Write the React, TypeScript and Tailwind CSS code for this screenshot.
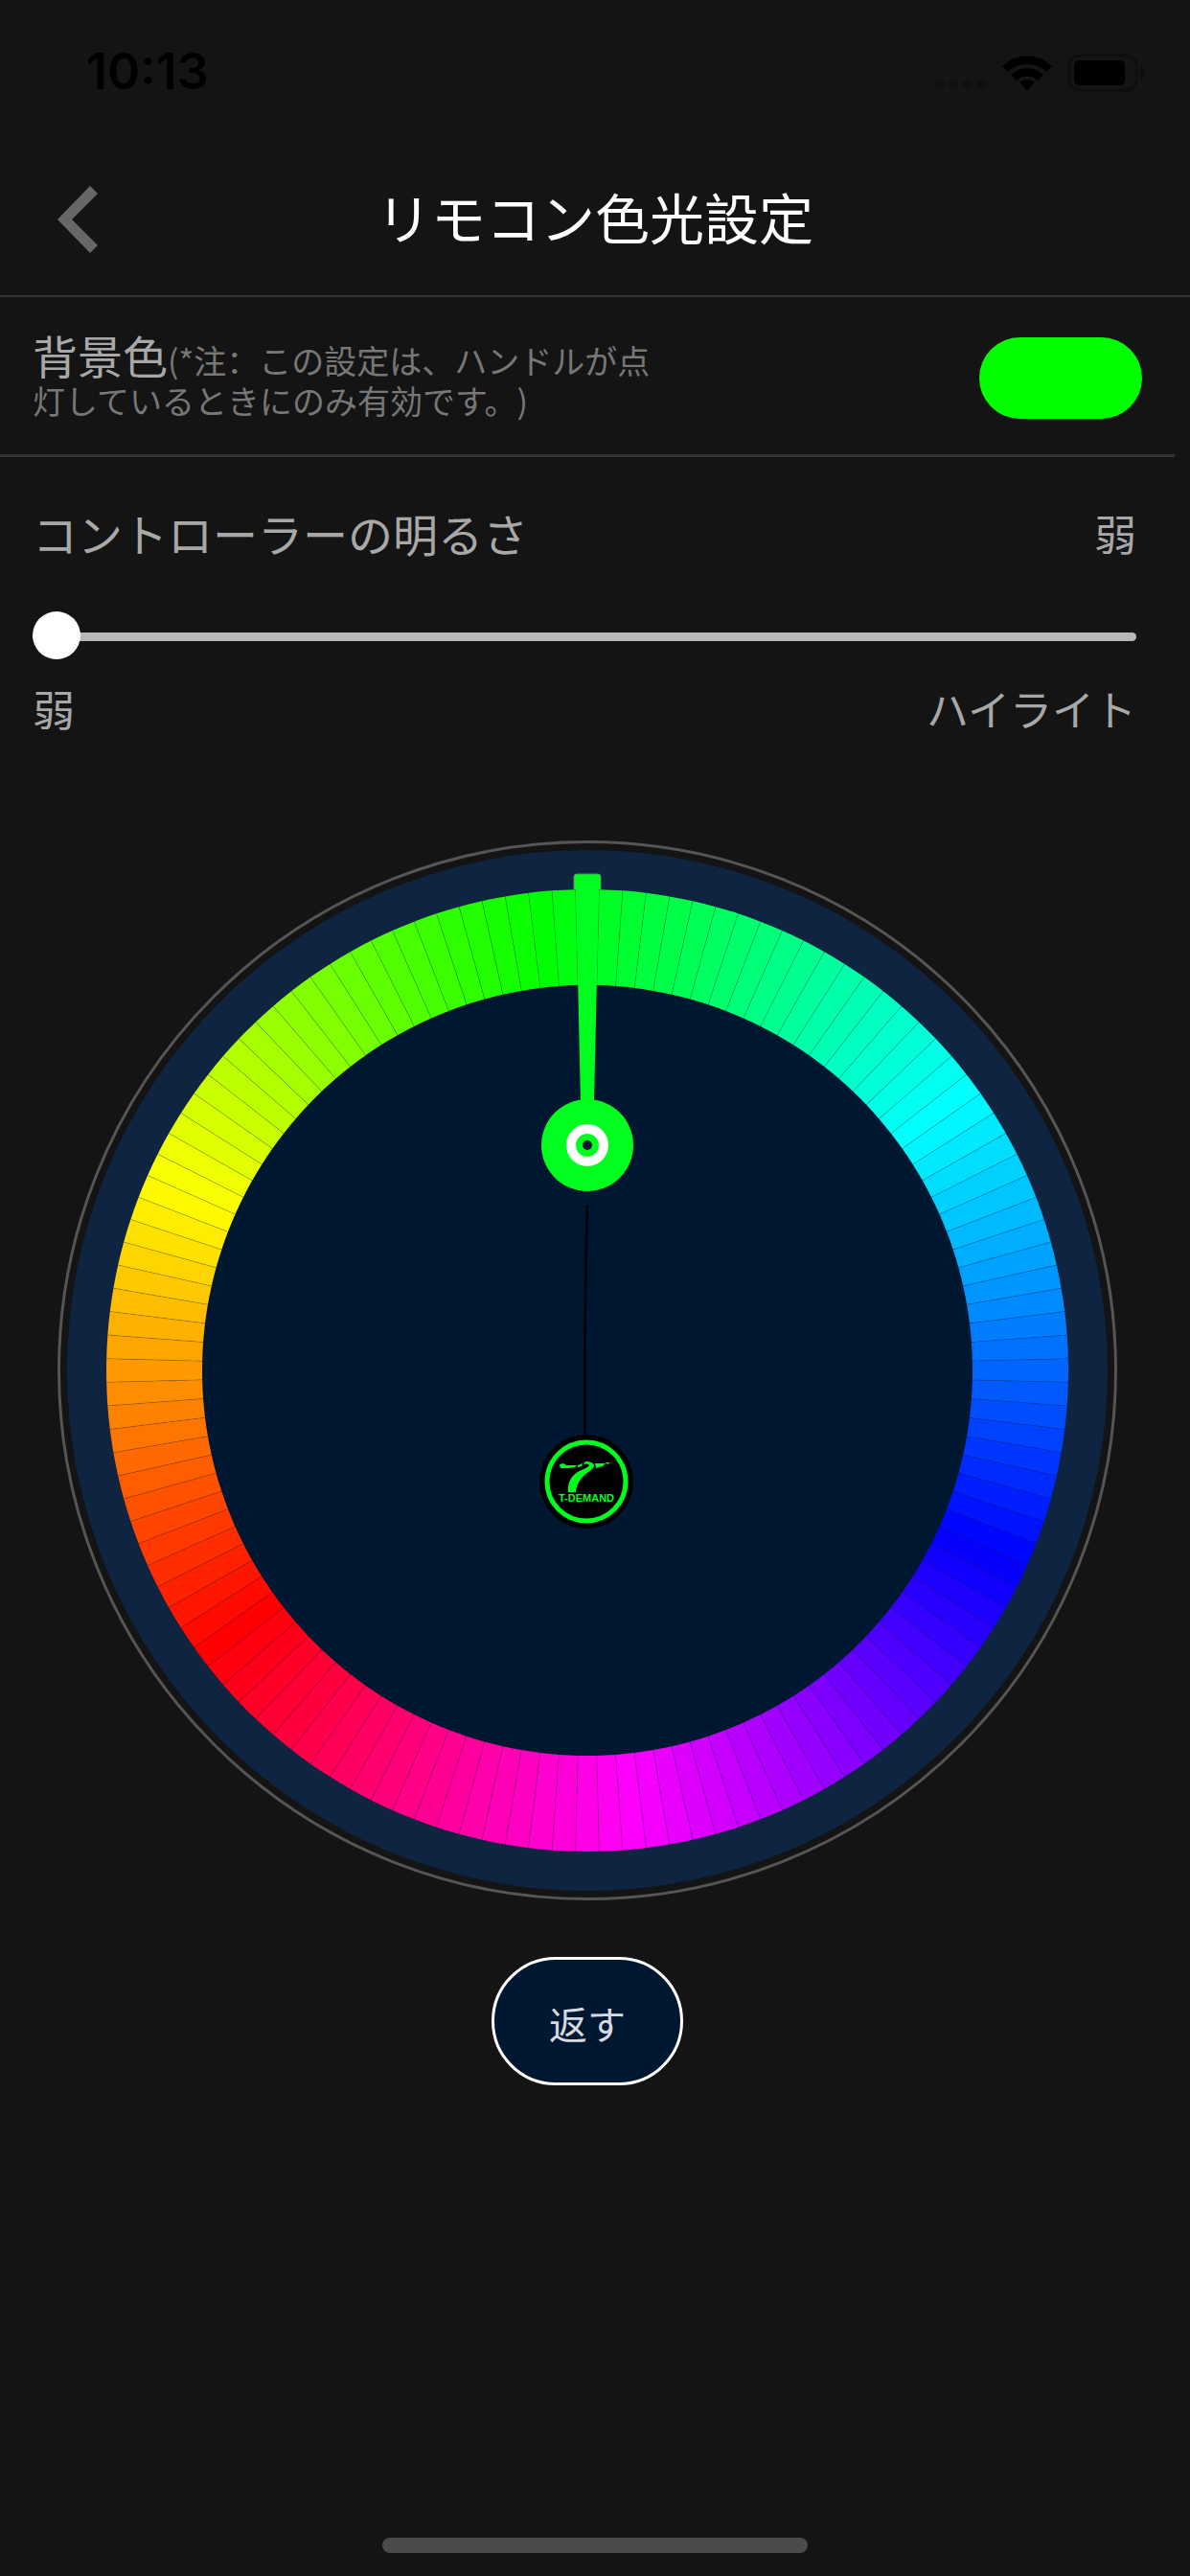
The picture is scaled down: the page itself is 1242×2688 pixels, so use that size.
import { useState } from 'react';

const SEGMENTS = 128;
const STEP = 360 / SEGMENTS;
const CENTER = 553;
const OUTER = 502;
const INNER = 402;

// angle is clockwise from 12 o'clock
function point(angle: number, radius: number): string {
  const rad = (angle * Math.PI) / 180;
  return `${(CENTER + radius * Math.sin(rad)).toFixed(2)} ${(CENTER - radius * Math.cos(rad)).toFixed(2)}`;
}

function segmentPath(angle: number): string {
  const a = angle - STEP / 2;
  const b = angle + STEP / 2;
  return `M${point(a, OUTER)} A${OUTER} ${OUTER} 0 0 1 ${point(b, OUTER)} L${point(b, INNER)} A${INNER} ${INNER} 0 0 0 ${point(a, INNER)} Z`;
}

const segments = Array.from({ length: SEGMENTS }, (_, i) => {
  const angle = i * STEP;
  return { angle, color: `hsl(${(angle + 126) % 360} 100% 50%)` };
});

function StatusBar(): JSX.Element {
  return (
    <div className="flex h-[150px] items-start justify-between pt-11 pr-12 pl-[90px] text-black">
      <span className="font-[Inter,sans-serif] text-[52px] leading-[62px] font-semibold">10:13</span>
      <svg width="220" height="62" viewBox="0 0 220 62" aria-hidden="true">
        <g fill="#0f0f0f">
          <circle cx="6" cy="44" r="5" />
          <circle cx="21" cy="44" r="5" />
          <circle cx="36" cy="44" r="5" />
          <circle cx="51" cy="44" r="5" />
        </g>
        <path d="M72 25 A37 37 0 0 1 124 25 L118 31 A29 29 0 0 0 78 31 Z" />
        <path d="M81 34 A24 24 0 0 1 115 34 L109 40 A16 16 0 0 0 87 40 Z" />
        <path d="M90 42 A12 12 0 0 1 106 42 L98 50 Z" />
        <rect x="142" y="14" width="70" height="36" rx="10" fill="none" stroke="#0e0e0e" strokeWidth="3" />
        <rect x="147" y="19" width="53" height="26" rx="5" />
        <path d="M216 25 Q220 27 220 32 Q220 37 216 39 Z" fill="#0c0c0c" />
      </svg>
    </div>
  );
}

function Charm(): JSX.Element {
  return (
    <g>
      <path d="M553 380 C552 420 550 470 550.5 622" fill="none" stroke="#000" strokeWidth="2.5" />
      <circle cx="552" cy="669" r="49" fill="#000" />
      <circle cx="552" cy="669" r="41" fill="none" stroke="#00ff1e" strokeWidth="5" />
      <g fill="#00ff1e">
        <path d="M524 651 L528 650 L531 652 L542 652 L540 654 L533 655 L525 655 Z" />
        <path d="M543 652 L548 650 L547 653 L543 654 Z" />
        <path d="M533 680 C532 668 538 660 549 656 C554 654 556 652 554 651 C552 650 551 651 549 651 L551 648 C556 648 561 650 560 653 C558 659 543 662 541 680 Z" />
        <path d="M561 650 L572 650 L569 653 L562 655 Z" />
        <path d="M572 649 L577 649 L574 651 Z" />
      </g>
      <text x="552" y="690" textAnchor="middle" fill="#00ff1e" className="font-['Liberation_Sans',Arial,sans-serif] text-[11px] font-bold">
        T-DEMAND
      </text>
    </g>
  );
}

function ColorDial(): JSX.Element {
  return (
    <svg viewBox="0 0 1106 1106" className="w-full" role="img" aria-label="色光">
      <circle cx={CENTER} cy={CENTER} r="551.5" fill="none" stroke="#555" strokeWidth="3" />
      <circle cx={CENTER} cy={CENTER} r="543" fill="#0e2440" />
      <circle cx={CENTER} cy={CENTER} r="404" fill="#001731" />
      {segments.map((s) => (
        <path key={s.angle} d={segmentPath(s.angle)} fill={s.color} />
      ))}
      {segments.map((s) => (
        <path
          key={s.angle}
          d={`M${point(s.angle + STEP / 2, INNER)} L${point(s.angle + STEP / 2, OUTER)}`}
          stroke="#001731"
          strokeOpacity="0.2"
          strokeWidth="1"
        />
      ))}
      <path d="M539 51 V38 Q539 35 542 35 H564 Q567 35 567 38 V51 Z" fill="#00ff1e" stroke="#5a8a6a" strokeWidth="1" />
      <path d="M540 36 H566 V51 H565 L560 274 H546 L541 51 H540 Z" fill="#00ff1e" />
      <circle cx={CENTER} cy="318" r="48" fill="#00ff1e" />
      <circle cx={CENTER} cy="318" r="17" fill="none" stroke="#fff" strokeWidth="10" />
      <circle cx={CENTER} cy="318" r="5" fill="#001731" />
      <Charm />
    </svg>
  );
}

export default function App(): JSX.Element {
  const [brightness, setBrightness] = useState(0);

  return (
    <div className="flex min-h-screen flex-col bg-[#141414] font-['Noto_Sans_CJK_SC',sans-serif] text-[#a8a8a8] [text-spacing-trim:space-all]">
      <StatusBar />

      <header className="grid h-40 grid-cols-[1fr_auto_1fr] items-center border-b-2 border-[#333] px-[60px]">
        <button type="button" aria-label="戻る" className="justify-self-start">
          <svg width="42" height="70" viewBox="0 0 42 70" aria-hidden="true">
            <path d="M34 0 L42 8 L15 35 L42 62 L34 70 L0 35 Z" fill="#676767" />
          </svg>
        </button>
        <h1 className="pb-2 text-[57px] leading-[80px] text-white">リモコン色光設定</h1>
      </header>

      <main className="pr-4">
        <section className="flex h-[167px] items-center justify-between border-b-3 border-[#333] px-[34px] pt-1">
          <p className="w-[660px] text-[34px] leading-[42px] text-[#777]">
            <span className="text-[47px] text-[#a8a8a8]">背景色</span>
            (*注：この設定は、ハンドルが点灯しているときにのみ有効です。)
          </p>
          <button type="button" aria-label="背景色" className="h-[85px] w-[170px] rounded-full bg-[#00ff00]" />
        </section>

        <section className="pt-[49px] pr-10 pl-[34px] text-[44px] leading-[60px]">
          <div className="flex items-center justify-between">
            <label htmlFor="brightness" className="text-[47px]">コントローラーの明るさ</label>
            <span>弱</span>
          </div>
          <input
            id="brightness"
            type="range"
            min={0}
            max={100}
            value={brightness}
            onChange={(e) => setBrightness(Number(e.target.value))}
            className="mt-[53px] block h-[50px] w-full appearance-none bg-transparent [&::-webkit-slider-runnable-track]:h-[9px] [&::-webkit-slider-runnable-track]:rounded-full [&::-webkit-slider-runnable-track]:bg-[#b8b8b8] [&::-webkit-slider-thumb]:-mt-[22px] [&::-webkit-slider-thumb]:size-[50px] [&::-webkit-slider-thumb]:appearance-none [&::-webkit-slider-thumb]:rounded-full [&::-webkit-slider-thumb]:bg-white"
          />
          <div className="mt-5 flex justify-between">
            <span>弱</span>
            <span>ハイライト</span>
          </div>
        </section>

        <section className="mt-[108px] flex flex-col items-center gap-[59px] px-[60px]">
          <ColorDial />
          <button type="button" className="h-[134px] w-[200px] rounded-full border-3 border-white bg-[#001731] pt-1 text-[40px] text-[#d5d9e0]">
            返す
          </button>
        </section>
      </main>

      <div className="mt-auto flex justify-center pt-6 pb-6">
        <div className="h-4 w-[444px] rounded-full bg-[#4b4b4b]" />
      </div>
    </div>
  );
}
